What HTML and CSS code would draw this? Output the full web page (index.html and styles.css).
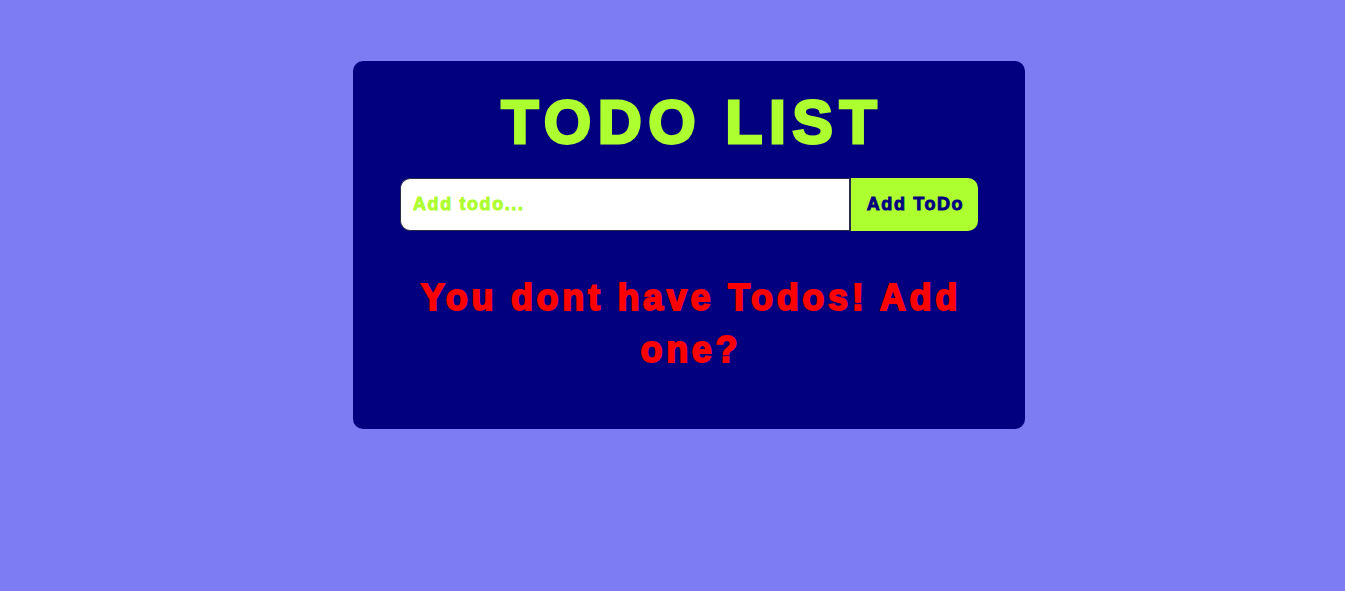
FILE: index.html
```html
<!DOCTYPE html>
<html>
<head>
<meta charset="utf-8">
<link rel="stylesheet" href="styles.css">
</head>
<body>
<div class="app">
  <div class="card">
    <h1 class="title">TODO LIST</h1>
    <form class="add-form">
      <input class="add-input" type="text" placeholder="Add todo...">
      <button class="add-btn" type="button">Add ToDo</button>
    </form>
    <p class="empty">You dont have Todos! Add one?</p>
  </div>
</div>
</body>
</html>
```
FILE: styles.css
```css
html, body {
  margin: 0;
  padding: 0;
}
body {
  background: #7d7cf3;
  font-family: "Liberation Sans", Arial, sans-serif;
  height: 591px;
}
.app {
  display: flex;
  justify-content: center;
  padding-top: 61px;
  padding-left: 33px;
}
.card {
  width: 672px;
  box-sizing: border-box;
  background: #02007f;
  border-radius: 10px;
  padding: 26px 47px 53px;
  display: flex;
  flex-direction: column;
  align-items: center;
}
.title {
  margin: 0;
  font-size: 61px;
  font-weight: 700;
  color: #adff2f;
  -webkit-text-stroke: 2.8px #adff2f;
  letter-spacing: 6.4px;
  text-indent: 6.4px;
  line-height: 70px;
  white-space: nowrap;
}
.add-form {
  display: flex;
  width: 578px;
  height: 53px;
  margin-top: 21px;
}
.add-input {
  flex: 1;
  min-width: 0;
  border: 1px solid #2a2a4a;
  border-right: 2px solid #2a2a4a;
  border-radius: 10px 0 0 10px;
  background: #fff;
  padding: 0 12px;
  font-family: inherit;
  font-weight: 700;
  font-size: 18px;
  letter-spacing: 1.6px;
  color: #02007f;
  outline: none;
}
.add-input::placeholder {
  color: #adff2f;
  -webkit-text-stroke: 0.9px #adff2f;
}
.add-btn {
  width: 127px;
  border: none;
  border-radius: 0 10px 10px 0;
  background: #adff2f;
  color: #02007f;
  font-family: inherit;
  font-weight: 700;
  font-size: 18px;
  -webkit-text-stroke: 0.9px #02007f;
  letter-spacing: 1.6px;
  padding: 0 0 0 2px;
}
.empty {
  margin: 41px 0 0;
  width: 578px;
  box-sizing: border-box;
  padding-left: 3.7px;
  text-align: center;
  color: #ff0000;
  font-size: 36px;
  font-weight: 700;
  -webkit-text-stroke: 1.8px #ff0000;
  letter-spacing: 3.7px;
  line-height: 52px;
}
```
